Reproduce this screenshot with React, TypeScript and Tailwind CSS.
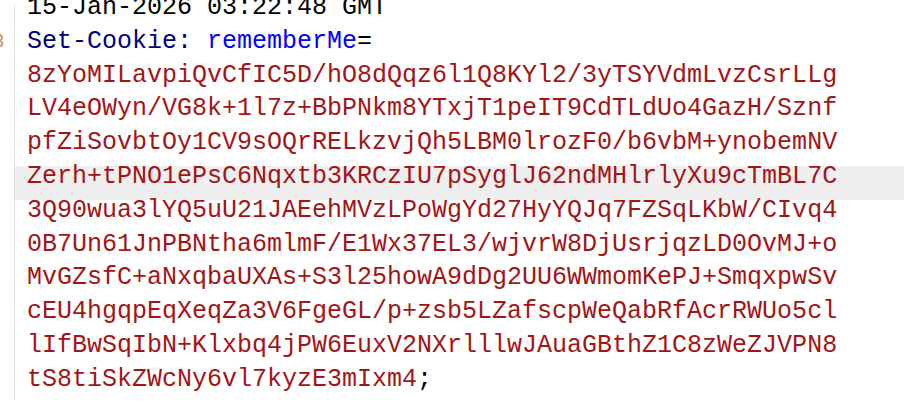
import React from 'react'

const valueLines = [
  '8zYoMILavpiQvCfIC5D/hO8dQqz6l1Q8KYl2/3yTSYVdmLvzCsrLLg',
  'LV4eOWyn/VG8k+1l7z+BbPNkm8YTxjT1peIT9CdTLdUo4GazH/Sznf',
  'pfZiSovbtOy1CV9sOQrRELkzvjQh5LBM0lrozF0/b6vbM+ynobemNV',
  'Zerh+tPNO1ePsC6Nqxtb3KRCzIU7pSyglJ62ndMHlrlyXu9cTmBL7C',
  '3Q90wua3lYQ5uU21JAEehMVzLPoWgYd27HyYQJq7FZSqLKbW/CIvq4',
  '0B7Un61JnPBNtha6mlmF/E1Wx37EL3/wjvrW8DjUsrjqzLD0OvMJ+o',
  'MvGZsfC+aNxqbaUXAs+S3l25howA9dDg2UU6WWmomKePJ+SmqxpwSv',
  'cEU4hgqpEqXeqZa3V6FgeGL/p+zsb5LZafscpWeQabRfAcrRWUo5cl',
  'lIfBwSqIbN+Klxbq4jPW6EuxV2NXrlllwJAuaGBthZ1C8zWeZJVPN8',
]

// index of the line with the current-line highlight
const activeLine = 5

function Line({
  active,
  children,
}: {
  active?: boolean
  children: React.ReactNode
}) {
  return (
    <div
      className={`h-[33.8px] leading-[22.7px] pl-[12px] whitespace-pre ${
        active ? 'bg-[#efefef]' : ''
      }`}
    >
      {children}
    </div>
  )
}

export default function App() {
  const lines: React.ReactNode[] = [
    <span className="text-black">15-Jan-2026 03:22:48 GMT</span>,
    <>
      <span className="text-[#000080]">Set-Cookie: </span>
      <span className="text-[#0000ff]">rememberMe</span>
      <span className="text-black">=</span>
    </>,
    ...valueLines.map((v) => <span className="text-[#a31515]">{v}</span>),
    <>
      <span className="text-[#a31515]">tS8tiSkZWcNy6vl7kyzE3mIxm4</span>
      <span className="text-black">;</span>
    </>,
  ]

  return (
    <div className="w-[904px] h-[404px] overflow-hidden bg-white flex font-['Liberation_Mono',monospace] text-[25px]">
      {/* gutter, line numbers mostly scrolled out of view */}
      <div className="w-[14px] shrink-0 overflow-hidden pt-[31px]">
        <div className="flex justify-end pr-[10px] h-[20px] leading-[20px] text-[19px] font-['Liberation_Sans',sans-serif] text-[#d9894f]">
          3
        </div>
      </div>

      {/* editor body */}
      <div className="flex-1 mt-[4px] mb-[5px] border-l border-[#e1e1e1]">
        <div className="-mt-[7px]">
          {lines.map((l, i) => (
            <Line key={i} active={i === activeLine}>
              {l}
            </Line>
          ))}
        </div>
      </div>
    </div>
  )
}
